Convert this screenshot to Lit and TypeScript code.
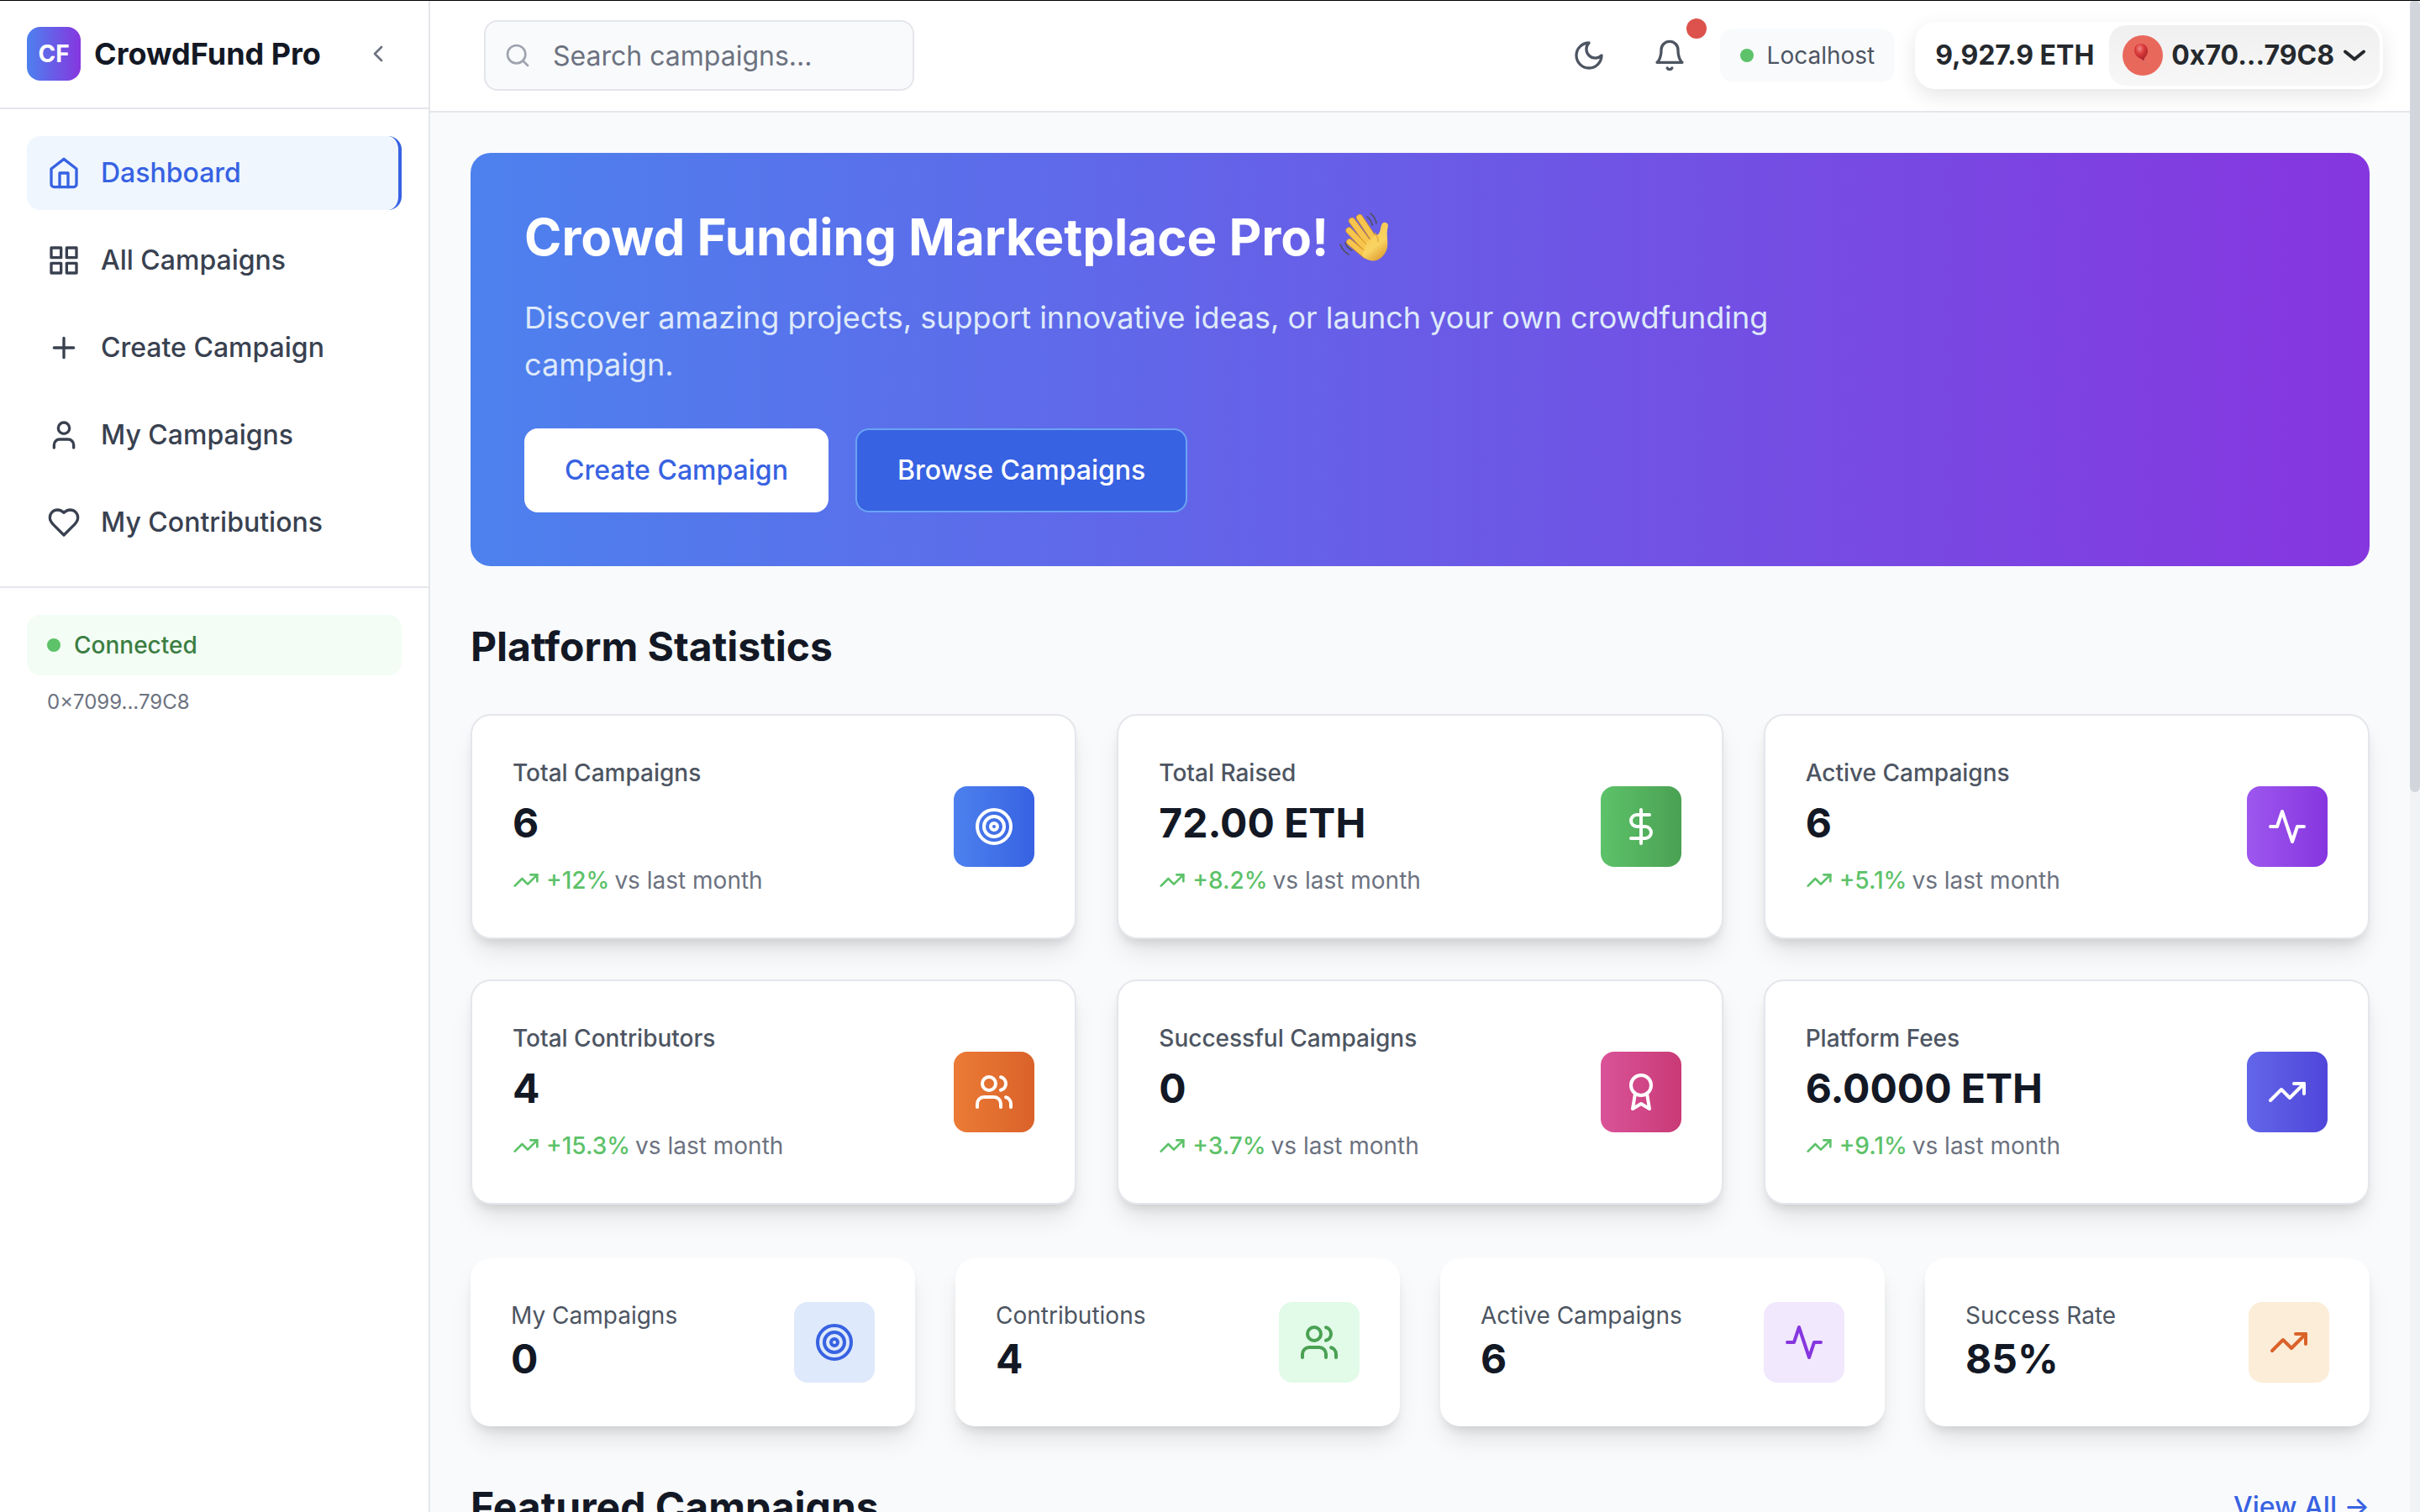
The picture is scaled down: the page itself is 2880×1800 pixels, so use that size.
import { LitElement, html, css, svg, SVGTemplateResult } from "lit";
import { customElement, property } from "lit/decorators.js";

const icons: Record<string, SVGTemplateResult> = {
  home: svg`<path d="m3 9 9-7 9 7v11a2 2 0 0 1-2 2H5a2 2 0 0 1-2-2z"/><path d="M9 22V12h6v10"/>`,
  grid: svg`<rect x="3" y="3" width="7" height="7"/><rect x="14" y="3" width="7" height="7"/><rect x="14" y="14" width="7" height="7"/><rect x="3" y="14" width="7" height="7"/>`,
  plus: svg`<path d="M5 12h14M12 5v14"/>`,
  user: svg`<path d="M19 21v-2a4 4 0 0 0-4-4H9a4 4 0 0 0-4 4v2"/><circle cx="12" cy="7" r="4"/>`,
  heart: svg`<path d="M19 14c1.49-1.46 3-3.21 3-5.5A5.5 5.5 0 0 0 16.5 3c-1.76 0-3 .5-4.5 2-1.5-1.5-2.74-2-4.5-2A5.5 5.5 0 0 0 2 8.5c0 2.3 1.5 4.05 3 5.5l7 7Z"/>`,
  chevronLeft: svg`<path d="m15 18-6-6 6-6"/>`,
  search: svg`<circle cx="11" cy="11" r="8"/><path d="m21 21-4.3-4.3"/>`,
  moon: svg`<path d="M12 3a6 6 0 0 0 9 9 9 9 0 1 1-9-9Z"/>`,
  bell: svg`<path d="M6 8a6 6 0 0 1 12 0c0 7 3 9 3 9H3s3-2 3-9"/><path d="M10.3 21a1.94 1.94 0 0 0 3.4 0"/>`,
  target: svg`<circle cx="12" cy="12" r="10"/><circle cx="12" cy="12" r="6"/><circle cx="12" cy="12" r="2"/>`,
  dollar: svg`<path d="M12 2v20"/><path d="M17 5H9.5a3.5 3.5 0 0 0 0 7h5a3.5 3.5 0 0 1 0 7H6"/>`,
  activity: svg`<path d="M22 12h-4l-3 9L9 3l-3 9H2"/>`,
  users: svg`<path d="M16 21v-2a4 4 0 0 0-4-4H6a4 4 0 0 0-4 4v2"/><circle cx="9" cy="7" r="4"/><path d="M22 21v-2a4 4 0 0 0-3-3.87"/><path d="M16 3.13a4 4 0 0 1 0 7.75"/>`,
  award: svg`<circle cx="12" cy="8" r="6"/><path d="M15.477 12.89 17 22l-5-3-5 3 1.523-9.11"/>`,
  trending: svg`<path d="m22 7-8.500 8.500-5-5L2 17"/><path d="M16 7h6v6"/>`,
};

@customElement("line-icon")
class LineIcon extends LitElement {
  @property() name = "home";

  static styles = css`
    :host {
      display: block;
      flex: none;
      width: 40px;
      height: 40px;
    }
    svg {
      display: block;
      width: 100%;
      height: 100%;
      fill: none;
      stroke: currentColor;
      stroke-width: 2;
      stroke-linecap: round;
      stroke-linejoin: round;
    }
  `;

  render() {
    return html`<svg viewBox="0 0 24 24" aria-hidden="true">${icons[this.name]}</svg>`;
  }
}

const navItems = [
  { icon: "home", label: "Dashboard", active: true },
  { icon: "grid", label: "All Campaigns" },
  { icon: "plus", label: "Create Campaign" },
  { icon: "user", label: "My Campaigns" },
  { icon: "heart", label: "My Contributions" },
];

const platformStats = [
  { label: "Total Campaigns", value: "6", change: "+12%", icon: "target", tone: "blue" },
  { label: "Total Raised", value: "72.00 ETH", change: "+8.2%", icon: "dollar", tone: "green" },
  { label: "Active Campaigns", value: "6", change: "+5.1%", icon: "activity", tone: "purple" },
  { label: "Total Contributors", value: "4", change: "+15.3%", icon: "users", tone: "orange" },
  { label: "Successful Campaigns", value: "0", change: "+3.7%", icon: "award", tone: "pink" },
  { label: "Platform Fees", value: "6.0000 ETH", change: "+9.1%", icon: "trending", tone: "indigo" },
];

const personalStats = [
  { label: "My Campaigns", value: "0", icon: "target", tone: "soft-blue" },
  { label: "Contributions", value: "4", icon: "users", tone: "soft-green" },
  { label: "Active Campaigns", value: "6", icon: "activity", tone: "soft-purple" },
  { label: "Success Rate", value: "85%", icon: "trending", tone: "soft-orange" },
];

@customElement("app-root")
class AppRoot extends LitElement {
  static styles = css`
    :host {
      display: block;
      font-family: Inter, "Liberation Sans", sans-serif;
      color: #131825;
    }
    * {
      box-sizing: border-box;
    }
    h1, h2, p {
      margin: 0;
    }
    button, input {
      font: inherit;
      color: inherit;
      border: 0;
      background: none;
      padding: 0;
    }
    a {
      color: inherit;
      text-decoration: none;
    }
    .app {
      position: relative;
      display: grid;
      grid-template-columns: 512px minmax(0, 1fr) 12px;
      grid-template-rows: 100%;
      height: 100vh;
      overflow: hidden;
      background: #f9fafc;
    }
    .app::before {
      content: "";
      position: absolute;
      inset: 0 0 auto 0;
      height: 1px;
      background: #000;
    }

    .sidebar {
      background: #fff;
      border-right: 2px solid #e5e6eb;
    }
    .brand {
      display: flex;
      align-items: center;
      gap: 16px;
      padding: 32px;
      border-bottom: 2px solid #e5e6eb;
    }
    .logo {
      display: grid;
      place-items: center;
      width: 64px;
      height: 64px;
      border-radius: 16px;
      background: linear-gradient(90deg, #4d81ee, #8636df);
      color: #fff;
      font-size: 28px;
      font-weight: 700;
    }
    .brand-name {
      flex: 1;
      font-size: 36px;
      line-height: 56px;
      font-weight: 700;
      white-space: nowrap;
    }
    .collapse {
      padding: 12px;
      color: #6c7280;
    }
    .icon-sm {
      width: 32px;
      height: 32px;
    }
    nav {
      display: flex;
      flex-direction: column;
      gap: 16px;
      padding: 32px;
      border-bottom: 2px solid #e5e6eb;
    }
    .nav-item {
      display: flex;
      align-items: center;
      gap: 24px;
      padding: 20px 24px;
      border-radius: 16px;
      font-size: 32px;
      line-height: 48px;
      font-weight: 500;
      color: #394150;
    }
    .nav-item.active {
      background: #eff6fe;
      color: #3762e2;
      border-right: 4px solid #3762e2;
    }
    .connection {
      display: flex;
      flex-direction: column;
      gap: 16px;
      padding: 32px;
    }
    .connected {
      display: flex;
      align-items: center;
      gap: 16px;
      padding: 16px 24px;
      border-radius: 16px;
      background: #f3fdf5;
      color: #3c7e43;
      font-size: 28px;
      line-height: 40px;
      font-weight: 500;
    }
    .dot {
      width: 16px;
      height: 16px;
      border-radius: 50%;
      background: #5dc269;
    }
    .address {
      padding: 0 24px;
      font-size: 24px;
      line-height: 32px;
      color: #6c7280;
    }

    .page {
      min-width: 0;
    }
    .topbar {
      display: flex;
      align-items: center;
      justify-content: space-between;
      padding: 24px 32px 24px 64px;
      background: #fff;
      border-bottom: 2px solid #e5e6eb;
    }
    .search {
      display: flex;
      align-items: center;
      gap: 26px;
      width: 512px;
      padding: 16px 22px;
      border: 2px solid #e5e6eb;
      border-radius: 16px;
      background: #f9fafc;
      color: #9ea3ae;
    }
    .search input {
      flex: 1;
      min-width: 0;
      height: 48px;
      font-size: 32px;
      color: #131825;
      outline: none;
    }
    .search input::placeholder {
      color: #6c7280;
      opacity: 1;
    }
    .tools {
      display: flex;
      align-items: center;
      gap: 24px;
    }
    .tool {
      position: relative;
      padding: 16px;
      color: #4d5562;
    }
    .badge {
      position: absolute;
      top: -8px;
      right: -8px;
      width: 24px;
      height: 24px;
      border-radius: 50%;
      background: #dd524c;
    }
    .network {
      display: flex;
      align-items: center;
      gap: 16px;
      padding: 12px 24px;
      border-radius: 16px;
      background: #f9fafc;
      color: #4d5562;
      font-size: 28px;
      line-height: 40px;
    }
    .wallet {
      display: flex;
      align-items: center;
      gap: 18px;
      padding: 4px 4px 4px 24px;
      border-radius: 24px;
      background: #fff;
      box-shadow: 0 8px 24px rgba(0, 0, 0, 0.1);
      color: #25292e;
      font-size: 32px;
      line-height: 48px;
      font-weight: 700;
      white-space: nowrap;
    }
    .account {
      display: flex;
      align-items: center;
      gap: 10px;
      padding: 12px 16px;
      border-radius: 20px;
      background: linear-gradient(0deg, #f7f7f7, #f0f0f0);
      font-weight: 700;
    }
    .avatar {
      width: 48px;
      height: 48px;
    }
    .caret {
      width: 28px;
      height: 14px;
    }

    .content {
      display: flex;
      flex-direction: column;
      gap: 64px;
      padding: 48px;
    }
    .hero {
      padding: 64px;
      border-radius: 24px;
      background: linear-gradient(90deg, #4d81ee, #8636df);
      color: #fff;
    }
    .hero-title {
      display: flex;
      align-items: center;
      gap: 12px;
      font-size: 60px;
      line-height: 72px;
      font-weight: 700;
    }
    .wave {
      width: 60px;
      height: 60px;
    }
    .hero-text {
      max-width: 1536px;
      margin: 32px 0 48px;
      font-size: 36px;
      line-height: 56px;
      color: #dee9fb;
    }
    .hero-actions {
      display: flex;
      gap: 32px;
    }
    .btn {
      padding: 24px 48px;
      border-radius: 16px;
      font-size: 32px;
      line-height: 48px;
      font-weight: 500;
    }
    .btn-light {
      background: #fff;
      color: #3762e2;
    }
    .btn-solid {
      background: #3762e2;
      border: 2px solid #6ba3f4;
    }
    .heading {
      font-size: 48px;
      line-height: 64px;
      font-weight: 700;
    }
    .section {
      display: flex;
      flex-direction: column;
      gap: 48px;
    }
    .grid-3, .grid-4 {
      display: grid;
      grid-template-columns: repeat(3, minmax(0, 1fr));
      gap: 48px;
    }
    .grid-4 {
      grid-template-columns: repeat(4, minmax(0, 1fr));
    }
    .card {
      display: flex;
      align-items: center;
      justify-content: space-between;
      padding: 48px;
      border-radius: 24px;
      background: #fff;
      box-shadow: 0 20px 30px -6px rgba(0, 0, 0, 0.1), 0 8px 12px -4px rgba(0, 0, 0, 0.1);
    }
    .card.bordered {
      border: 2px solid #e5e6eb;
    }
    .label {
      font-size: 28px;
      line-height: 40px;
      color: #4d5562;
    }
    .bordered .label {
      margin-bottom: 8px;
      font-weight: 500;
    }
    .value {
      font-size: 48px;
      line-height: 64px;
      font-weight: 700;
    }
    .trend, .trend-text {
      display: flex;
      align-items: center;
      gap: 8px;
    }
    .trend {
      margin-top: 16px;
      font-size: 28px;
      line-height: 40px;
      color: #6c7280;
    }
    .trend-text {
      gap: 6px;
    }
    .up {
      color: #5dc269;
      font-weight: 500;
    }
    .tile {
      padding: 24px;
      border-radius: 16px;
      color: #fff;
    }
    .icon-lg {
      width: 48px;
      height: 48px;
    }
    .blue { background: linear-gradient(90deg, #4d81ee, #3762e2); }
    .green { background: linear-gradient(90deg, #5dc269, #4aa153); }
    .purple { background: linear-gradient(90deg, #9d57ee, #8636df); }
    .orange { background: linear-gradient(90deg, #eb7b35, #da622a); }
    .pink { background: linear-gradient(90deg, #d95399, #c93a76); }
    .indigo { background: linear-gradient(90deg, #6366e9, #4f46da); }
    .soft-blue { background: #dee9fb; color: #3762e2; }
    .soft-green { background: #e2fae8; color: #4aa153; }
    .soft-purple { background: #f1e8fd; color: #8636df; }
    .soft-orange { background: #fcedd8; color: #da622a; }
    .row {
      display: flex;
      align-items: center;
      justify-content: space-between;
    }
    .view-all {
      font-size: 32px;
      line-height: 48px;
      font-weight: 500;
      color: #3762e2;
    }
    .scrollbar {
      background: #f2f3f5;
    }
    .thumb {
      height: 52.4%;
      border-radius: 6px;
      background: #d2d5db;
    }
  `;

  private wave() {
    return html`<svg class="wave" viewBox="0 0 60 60" role="img" aria-label="👋">
      <defs>
        <linearGradient id="palm" x1="0.2" y1="0" x2="0.75" y2="1">
          <stop offset="0" stop-color="#f6c34a" />
          <stop offset="0.6" stop-color="#f9d463" />
          <stop offset="1" stop-color="#dd9a2d" />
        </linearGradient>
      </defs>
      <g fill="none" stroke-linecap="round">
        <g stroke="#4f5059" stroke-width="1.600">
          <path d="M38 2q6 5 7 12M34 6q5 4 6 10M2 39q3 8 10 12M8 37q2 6 8 9" />
        </g>
        <path d="M25 7 43 34" stroke="#d6952c" stroke-width="8" />
        <path d="M25 7 43 34" stroke="#f7c54d" stroke-width="6.600" />
        <path d="M16 11 36 38" stroke="#d6952c" stroke-width="8" />
        <path d="M16 11 36 38" stroke="#f7c54d" stroke-width="6.600" />
        <path d="M12.500 22.500 33 44" stroke="#d6952c" stroke-width="8" />
        <path d="M12.500 22.500 33 44" stroke="#f7c54d" stroke-width="6.600" />
        <path d="M13 36 32 52" stroke="#d6952c" stroke-width="7.600" />
        <path d="M13 36 32 52" stroke="#f7c54d" stroke-width="6.200" />
      </g>
      <path
        d="M34 36C38 31 43 32 44 26C46 30 49 26 50 20C51 14 53 12 56 13C60 14 59 17 58 22C57 28 59 34 58 42C57 50 50 58 42 58.500C36 58.500 31 56 28 52Z"
        fill="url(#palm)"
      />
      <path d="M43.500 25.500C46 30 48 31 47 36" fill="none" stroke="#dfa236" stroke-width="1.200" stroke-linecap="round" />
    </svg>`;
  }

  private avatar() {
    return html`<svg class="avatar" viewBox="0 0 48 48" aria-hidden="true">
      <defs>
        <radialGradient id="balloon" cx="0.4" cy="0.3" r="0.7">
          <stop offset="0" stop-color="#f08a86" />
          <stop offset="0.45" stop-color="#dc3b3b" />
          <stop offset="1" stop-color="#a8232b" />
        </radialGradient>
      </defs>
      <circle cx="24" cy="24" r="24" fill="#e9685c" />
      <path d="M25 29q0 3 2 4t3 4" fill="none" stroke="#c9756c" stroke-width="1" />
      <path d="M22 10c5 0 8 4 8 9 0 4-3 7-4.500 9l.500 1.500-2.500.300-.300-1.300C18 27 14 23 14 18c0-5 3-8 8-8Z" fill="url(#balloon)" />
    </svg>`;
  }

  render() {
    return html`
      <div class="app">
        <aside class="sidebar">
          <div class="brand">
            <div class="logo">CF</div>
            <div class="brand-name">CrowdFund Pro</div>
            <button class="collapse" aria-label="Collapse sidebar">
              <line-icon class="icon-sm" name="chevronLeft"></line-icon>
            </button>
          </div>
          <nav>
            ${navItems.map(
              (n) => html`<a class="nav-item ${n.active ? "active" : ""}" href="#">
                <line-icon name=${n.icon}></line-icon>${n.label}
              </a>`
            )}
          </nav>
          <div class="connection">
            <div class="connected"><span class="dot"></span>Connected</div>
            <div class="address">0×7099...79C8</div>
          </div>
        </aside>

        <div class="page">
          <header class="topbar">
            <label class="search">
              <line-icon class="icon-sm" name="search"></line-icon>
              <input type="text" placeholder="Search campaigns..." aria-label="Search campaigns" />
            </label>
            <div class="tools">
              <button class="tool" aria-label="Toggle theme"><line-icon name="moon"></line-icon></button>
              <button class="tool" aria-label="Notifications">
                <line-icon name="bell"></line-icon><span class="badge"></span>
              </button>
              <div class="network"><span class="dot"></span>Localhost</div>
              <div class="wallet">
                <span>9,927.9 ETH</span>
                <button class="account">
                  ${this.avatar()}<span>0x70...79C8</span>
                  <svg class="caret" viewBox="0 0 28 14" aria-hidden="true">
                    <path d="M3 2.500 14 11.500 25 2.500" fill="none" stroke="currentColor" stroke-width="4" stroke-linecap="round" stroke-linejoin="round" />
                  </svg>
                </button>
              </div>
            </div>
          </header>

          <main class="content">
            <section class="hero">
              <h1 class="hero-title">Crowd Funding Marketplace Pro! ${this.wave()}</h1>
              <p class="hero-text">
                Discover amazing projects, support innovative ideas, or launch your own crowdfunding campaign.
              </p>
              <div class="hero-actions">
                <button class="btn btn-light">Create Campaign</button>
                <button class="btn btn-solid">Browse Campaigns</button>
              </div>
            </section>

            <section class="section">
              <h2 class="heading">Platform Statistics</h2>
              <div class="grid-3">
                ${platformStats.map(
                  (s) => html`<article class="card bordered">
                    <div>
                      <p class="label">${s.label}</p>
                      <p class="value">${s.value}</p>
                      <p class="trend">
                        <line-icon class="icon-sm up" name="trending"></line-icon>
                        <span class="trend-text"><span class="up">${s.change}</span><span>vs last month</span></span>
                      </p>
                    </div>
                    <div class="tile ${s.tone}"><line-icon class="icon-lg" name=${s.icon}></line-icon></div>
                  </article>`
                )}
              </div>
            </section>

            <section class="grid-4">
              ${personalStats.map(
                (s) => html`<article class="card">
                  <div>
                    <p class="label">${s.label}</p>
                    <p class="value">${s.value}</p>
                  </div>
                  <div class="tile ${s.tone}"><line-icon class="icon-lg" name=${s.icon}></line-icon></div>
                </article>`
              )}
            </section>

            <section class="row">
              <h2 class="heading">Featured Campaigns</h2>
              <a class="view-all" href="#">View All →</a>
            </section>
          </main>
        </div>

        <div class="scrollbar"><div class="thumb"></div></div>
      </div>
    `;
  }
}
